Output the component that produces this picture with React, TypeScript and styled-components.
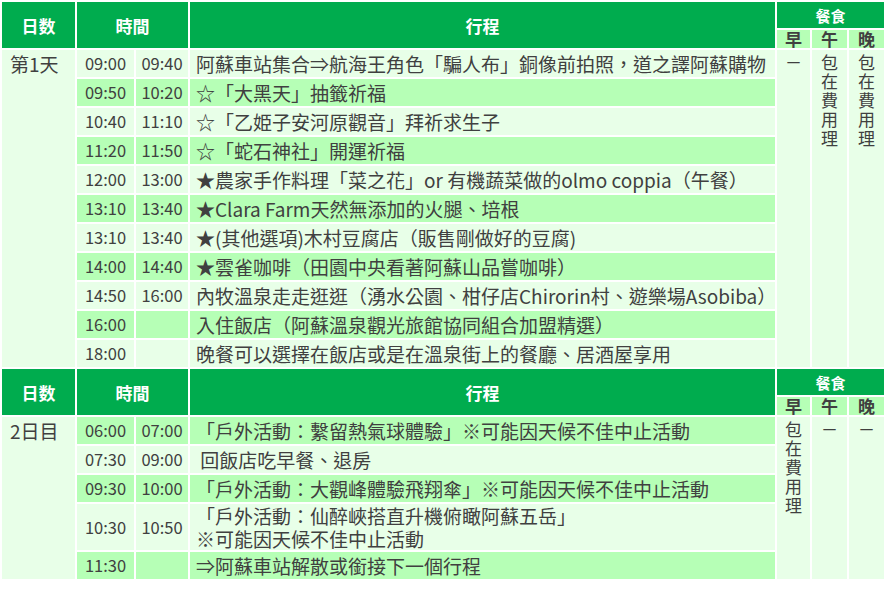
import React, { FC } from 'react';
import styled, { createGlobalStyle } from 'styled-components';

const GlobalStyle = createGlobalStyle`
  html, body {
    margin: 0;
    padding: 0;
    background: #fff;
  }
  body {
    font-family: "Noto Sans CJK TC", "Noto Sans", sans-serif;
    color: #404040;
  }
`;

interface ItineraryRow {
  start: string;
  end?: string;
  text: React.ReactNode;
  twoLine?: boolean;
}

interface DayPlan {
  label: string;
  rows: ItineraryRow[];
  firstAlt: boolean;
  meals: [string, string, string];
}

const INCLUDED = '包在費用理';

const days: DayPlan[] = [
  {
    label: '第1天',
    firstAlt: false,
    meals: ['－', INCLUDED, INCLUDED],
    rows: [
      { start: '09:00', end: '09:40', text: '阿蘇車站集合⇒航海王角色「騙人布」銅像前拍照，道之譯阿蘇購物' },
      { start: '09:50', end: '10:20', text: '☆「大黑天」抽籤祈福' },
      { start: '10:40', end: '11:10', text: '☆「乙姫子安河原觀音」拜祈求生子' },
      { start: '11:20', end: '11:50', text: '☆「蛇石神社」開運祈福' },
      { start: '12:00', end: '13:00', text: '★農家手作料理「菜之花」or 有機蔬菜做的olmo coppia（午餐）' },
      { start: '13:10', end: '13:40', text: '★Clara Farm天然無添加的火腿、培根' },
      { start: '13:10', end: '13:40', text: '★(其他選項)木村豆腐店（販售剛做好的豆腐)' },
      { start: '14:00', end: '14:40', text: '★雲雀咖啡（田園中央看著阿蘇山品嘗咖啡）' },
      { start: '14:50', end: '16:00', text: '內牧溫泉走走逛逛（湧水公園、柑仔店Chirorin村、遊樂場Asobiba）' },
      { start: '16:00', text: '入住飯店（阿蘇溫泉觀光旅館協同組合加盟精選）' },
      { start: '18:00', text: '晚餐可以選擇在飯店或是在溫泉街上的餐廳、居酒屋享用' },
    ],
  },
  {
    label: '2日目',
    firstAlt: true,
    meals: [INCLUDED, '－', '－'],
    rows: [
      { start: '06:00', end: '07:00', text: '「戶外活動：繫留熱氣球體驗」※可能因天候不佳中止活動' },
      { start: '07:30', end: '09:00', text: '\u00a0回飯店吃早餐、退房' },
      { start: '09:30', end: '10:00', text: '「戶外活動：大觀峰體驗飛翔傘」※可能因天候不佳中止活動' },
      {
        start: '10:30',
        end: '10:50',
        twoLine: true,
        text: (
          <>
            「戶外活動：仙醉峽搭直升機俯瞰阿蘇五岳」
            <br />
            ※可能因天候不佳中止活動
          </>
        ),
      },
      { start: '11:30', text: '⇒阿蘇車站解散或銜接下一個行程' },
    ],
  },
];

const Table = styled.table`
  border-collapse: separate;
  border-spacing: 2px;
  table-layout: fixed;
  width: 886px;
  font-size: 19px;
`;

const HeadCell = styled.th`
  background: #00ac4e;
  color: #fff;
  font-weight: 700;
  font-size: 17px;
  text-align: center;
  vertical-align: middle;
  padding: 0;
`;

const MealTitle = styled(HeadCell)`
  font-size: 15px;
  height: 26px;
`;

const SubHeadCell = styled.th`
  background: #b6ffb6;
  color: #404040;
  font-weight: 700;
  font-size: 17px;
  height: 18px;
  line-height: 18px;
  text-align: center;
  padding: 0;
`;

const Row = styled.tr<{ $alt: boolean; $tall?: boolean }>`
  height: ${(p) => (p.$tall ? 46 : 27)}px;
  background: ${(p) => (p.$alt ? '#b6ffb6' : '#e8ffe8')};
`;

const DayCell = styled.td`
  background: #e8ffe8;
  vertical-align: top;
  padding: 0 8px;
  line-height: 28px;
  font-size: 19px;
`;

const TimeCell = styled.td`
  text-align: center;
  padding: 0;
  line-height: 27px;
  font-size: 16.5px;
`;

const ItemCell = styled.td`
  padding: 0 6px;
  line-height: 23px;
  white-space: nowrap;
`;

const MealCell = styled.td`
  background: #e8ffe8;
  vertical-align: top;
  text-align: center;
  padding: 2px 7px 0;
  line-height: 19px;
  font-size: 17px;
  word-break: break-all;
`;

const DaySection: FC<{ plan: DayPlan }> = ({ plan }) => (
  <tbody>
    <tr>
      <HeadCell rowSpan={2}>日数</HeadCell>
      <HeadCell rowSpan={2} colSpan={2}>
        時間
      </HeadCell>
      <HeadCell rowSpan={2}>行程</HeadCell>
      <MealTitle colSpan={3}>餐食</MealTitle>
    </tr>
    <tr>
      <SubHeadCell>早</SubHeadCell>
      <SubHeadCell>午</SubHeadCell>
      <SubHeadCell>晚</SubHeadCell>
    </tr>
    {plan.rows.map((row, i) => {
      const alt = i % 2 === 0 ? plan.firstAlt : !plan.firstAlt;
      return (
        <Row key={i} $alt={alt} $tall={row.twoLine}>
          {i === 0 && <DayCell rowSpan={plan.rows.length}>{plan.label}</DayCell>}
          <TimeCell>{row.start}</TimeCell>
          <TimeCell>{row.end ?? ''}</TimeCell>
          <ItemCell>{row.text}</ItemCell>
          {i === 0 &&
            plan.meals.map((m, j) => (
              <MealCell key={j} rowSpan={plan.rows.length}>
                {m}
              </MealCell>
            ))}
        </Row>
      );
    })}
  </tbody>
);

const App: FC = () => (
  <>
    <GlobalStyle />
    <Table>
      <colgroup>
        <col style={{ width: 73 }} />
        <col style={{ width: 57 }} />
        <col style={{ width: 52 }} />
        <col style={{ width: 585 }} />
        <col style={{ width: 33 }} />
        <col style={{ width: 35 }} />
        <col style={{ width: 35 }} />
      </colgroup>
      {days.map((d) => (
        <DaySection key={d.label} plan={d} />
      ))}
    </Table>
  </>
);

export default App;
